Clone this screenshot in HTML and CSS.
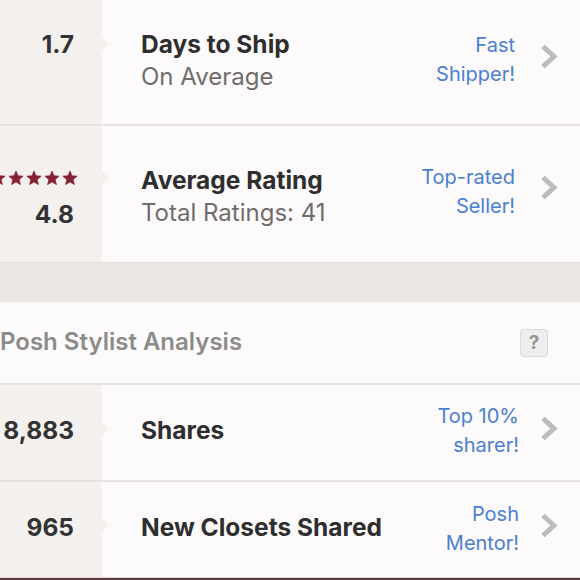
FILE: index.html
```html
<!DOCTYPE html>
<html>
<head>
<meta charset="utf-8">
<link rel="stylesheet" href="styles.css">
</head>
<body>
<div class="page">
  <div class="row r1">
    <div class="left"><div class="num">1.7</div></div>
    <div class="main">
      <div class="title">Days to Ship</div>
      <div class="sub">On Average</div>
    </div>
    <div class="badge">Fast<br>Shipper!</div>
    <svg class="chev" viewBox="0 0 18 25"><polyline points="3,2.5 14,12.5 3,22.5" /></svg>
  </div>
  <div class="row r2">
    <div class="left">
      <svg class="stars" viewBox="0 0 80 16">
        <defs><path id="st" d="M0,-7.5 L2,-2.75 L7.13,-2.32 L3.23,1.05 L4.41,6.07 L0,3.4 L-4.41,6.07 L-3.23,1.05 L-7.13,-2.32 L-2,-2.75Z"/></defs>
        <g class="starg">
          <use href="#st" transform="translate(-2,8.5)"/>
          <use href="#st" transform="translate(16,8.5)"/>
          <use href="#st" transform="translate(34,8.5)"/>
          <use href="#st" transform="translate(52,8.5)"/>
          <use href="#st" transform="translate(70,8.5)"/>
        </g>
      </svg>
      <div class="num">4.8</div>
    </div>
    <div class="main">
      <div class="title">Average Rating</div>
      <div class="sub">Total Ratings: 41</div>
    </div>
    <div class="badge">Top-rated<br>Seller!</div>
    <svg class="chev" viewBox="0 0 18 25"><polyline points="3,2.5 14,12.5 3,22.5" /></svg>
  </div>
  <div class="band"></div>
  <div class="header">
    <div class="htitle">Posh Stylist Analysis</div>
    <div class="help">?</div>
  </div>
  <div class="row r3">
    <div class="left"><div class="num">8,883</div></div>
    <div class="main"><div class="title">Shares</div></div>
    <div class="badge">Top 10%<br>sharer!</div>
    <svg class="chev" viewBox="0 0 18 25"><polyline points="3,2.5 14,12.5 3,22.5" /></svg>
  </div>
  <div class="row r4">
    <div class="left"><div class="num">965</div></div>
    <div class="main"><div class="title">New Closets Shared</div></div>
    <div class="badge">Posh<br>Mentor!</div>
    <svg class="chev" viewBox="0 0 18 25"><polyline points="3,2.5 14,12.5 3,22.5" /></svg>
  </div>
  <div class="bottom"></div>
</div>
</body>
</html>
```
FILE: styles.css
```css
html, body {
  margin: 0;
  padding: 0;
  background: #fcfafa;
}
.page {
  width: 580px;
  height: 580px;
  overflow: hidden;
  font-family: Inter, Lato, sans-serif;
  background: #fcfafa;
}
.row {
  display: flex;
  align-items: stretch;
  border-bottom: 2px solid #e6e2df;
  box-sizing: border-box;
}
.r1 { height: 126px; }
.r2 { height: 136px; border-bottom: none; }
.r3 { height: 97px; }
.r4 { height: 95px; border-bottom: none; }
.left {
  position: relative;
  width: 102px;
  flex: none;
  background: #f3f0ed;
  display: flex;
  flex-direction: column;
  justify-content: center;
  align-items: flex-end;
  padding-right: 28px;
  box-sizing: border-box;
}
.left::after {
  content: "";
  position: absolute;
  right: -7px;
  top: 50%;
  margin-top: -7px;
  border-left: 7px solid #f3f0ed;
  border-top: 7px solid transparent;
  border-bottom: 7px solid transparent;
}
.r1 .left::after { margin-top: -25px; }
.r2 .left::after { margin-top: -23px; }
.r3 .left::after { margin-top: -11px; }
.r4 .left::after { margin-top: -12px; }
.num {
  font-size: 24.5px;
  font-weight: 700;
  color: #333;
  line-height: 30px;
}
.r1 .num { margin-bottom: 36px; }
.r2 .left { padding-top: 11px; }
.r3 .left, .r4 .left { padding-bottom: 5px; }
.stars {
  display: block;
  width: 80px;
  height: 16px;
  margin-right: -6px;
  margin-bottom: 13px;
}
.starg {
  fill: #852235;
  stroke: #852235;
  stroke-width: 0.7;
  stroke-linejoin: round;
}
.main {
  flex: 1;
  padding-left: 39px;
  display: flex;
  flex-direction: column;
  justify-content: center;
}
.title {
  font-size: 24.5px;
  font-weight: 700;
  color: #2e2e2e;
  line-height: 30px;
}
.sub {
  font-size: 24px;
  color: #6f6d6b;
  line-height: 36px;
}
.r2 .main { padding-top: 8px; }
.r3 .main, .r4 .main { padding-bottom: 5px; }
.badge {
  align-self: center;
  text-align: right;
  color: #4a7fd1;
  font-size: 20px;
  line-height: 29px;
}
.r1 .badge { margin-right: 25px; margin-bottom: 4px; }
.r2 .badge { margin-right: 25px; margin-bottom: 4px; }
.r3 .badge { margin-right: 21px; margin-bottom: 3px; }
.r4 .badge { margin-right: 21px; margin-bottom: 2px; }
.chev {
  align-self: center;
  width: 18px;
  height: 25px;
  margin-right: 22px;
  flex: none;
}
.r1 .chev { margin-bottom: 12px; }
.r2 .chev { margin-bottom: 13px; }
.r3 .chev, .r4 .chev { margin-bottom: 9px; }
.chev polyline {
  fill: none;
  stroke: #bdbcbb;
  stroke-width: 5;
}
.band {
  height: 40px;
  background: #ebe7e3;
  border-top: 1px solid #e2deda;
  box-sizing: border-box;
}
.header {
  height: 83px;
  display: flex;
  align-items: center;
  justify-content: space-between;
  border-bottom: 2px solid #e6e2df;
  box-sizing: border-box;
  padding-bottom: 2px;
}
.htitle {
  font-size: 24px;
  color: #8d8b89;
  font-weight: 600;
}
.help {
  width: 26px;
  height: 26px;
  border: 1px solid #dcdad8;
  border-radius: 4px;
  background: #f0eeed;
  color: #9a9897;
  font-weight: 700;
  font-size: 19px;
  line-height: 26px;
  text-align: center;
  margin-right: 32px;
  margin-top: 2px;
}
.bottom {
  height: 3px;
  border-top: 1px solid #e7d6d9;
  background: #5b3a42;
  box-sizing: border-box;
}
```
